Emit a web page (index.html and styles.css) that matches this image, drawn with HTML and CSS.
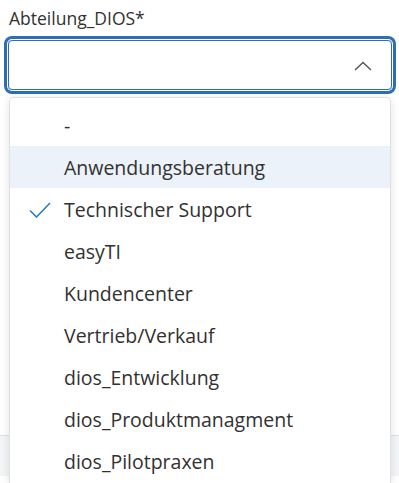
FILE: index.html
```html
<!DOCTYPE html>
<html lang="de">
<head>
  <meta charset="UTF-8" />
  <meta name="viewport" content="width=device-width, initial-scale=1.0" />
  <title>Abteilung_DIOS</title>
  <link rel="stylesheet" href="styles.css">
</head>
<body>
  <div class="field">
    <label class="field-label">Abteilung_DIOS*</label>
    <div class="combo">
      <span class="combo-value"></span>
      <svg class="chevron" width="18" height="10" viewBox="0 0 18 10">
        <path d="M1 9 L9 1.5 L17 9" fill="none" stroke="#555" stroke-width="1.4" />
      </svg>
    </div>
  </div>

  <div class="divider"></div>

  <ul class="dropdown">
    <li class="option">-</li>
    <li class="option hover">Anwendungsberatung</li>
    <li class="option selected">
      <svg class="check" width="22" height="16" viewBox="0 0 22 16">
        <path d="M1 8.5 L7.5 15 L21 1" fill="none" stroke="#2f7ac4" stroke-width="1.6" />
      </svg>
      Technischer Support
    </li>
    <li class="option">easyTI</li>
    <li class="option">Kundencenter</li>
    <li class="option">Vertrieb/Verkauf</li>
    <li class="option">dios_Entwicklung</li>
    <li class="option">dios_Produktmanagment</li>
    <li class="option">dios_Pilotpraxen</li>
  </ul>
</body>
</html>
```

FILE: styles.css
```css
body {
  margin: 0;
  font-family: "Open Sans", "Noto Sans", sans-serif;
  color: #323130;
  background: #fff;
  position: relative;
  height: 483px;
  overflow: hidden;
}
.field {
  padding: 7px 7px 0 8px;
}
.field-label {
  display: block;
  font-size: 17.5px;
  line-height: 23px;
  margin-left: 1px;
}
.combo {
  margin-top: 10px;
  height: 48px;
  border: 1px solid #2a6fb7;
  border-radius: 4px;
  box-shadow: 0 0 0 1px #fff, 0 0 0 4px #2a6fb7;
  display: flex;
  align-items: center;
  justify-content: flex-end;
  padding-right: 19px;
}
.chevron {
  margin-top: 2px;
}
.divider {
  margin-top: 345px;
  border-top: 1px solid #dde1e4;
  height: 40px;
  background: #f3f5f7;
}
.dropdown {
  position: absolute;
  top: 97px;
  left: 9px;
  width: 382px;
  box-sizing: border-box;
  height: 386px;
  margin: 0;
  padding: 6px 0 0;
  list-style: none;
  background: #fff;
  border: 1px solid #e1e1e1;
  border-bottom: none;
  border-radius: 5px 5px 0 0;
  box-shadow: 0 2px 10px rgba(0, 0, 0, 0.12);
  overflow: hidden;
}
.option {
  height: 42px;
  flex-shrink: 0;
  display: flex;
  align-items: center;
  padding-left: 54px;
  font-size: 19.5px;
  position: relative;
}
.option.hover {
  background: #ebf2f9;
}
.check {
  position: absolute;
  left: 19px;
  top: 14px;
}
```
